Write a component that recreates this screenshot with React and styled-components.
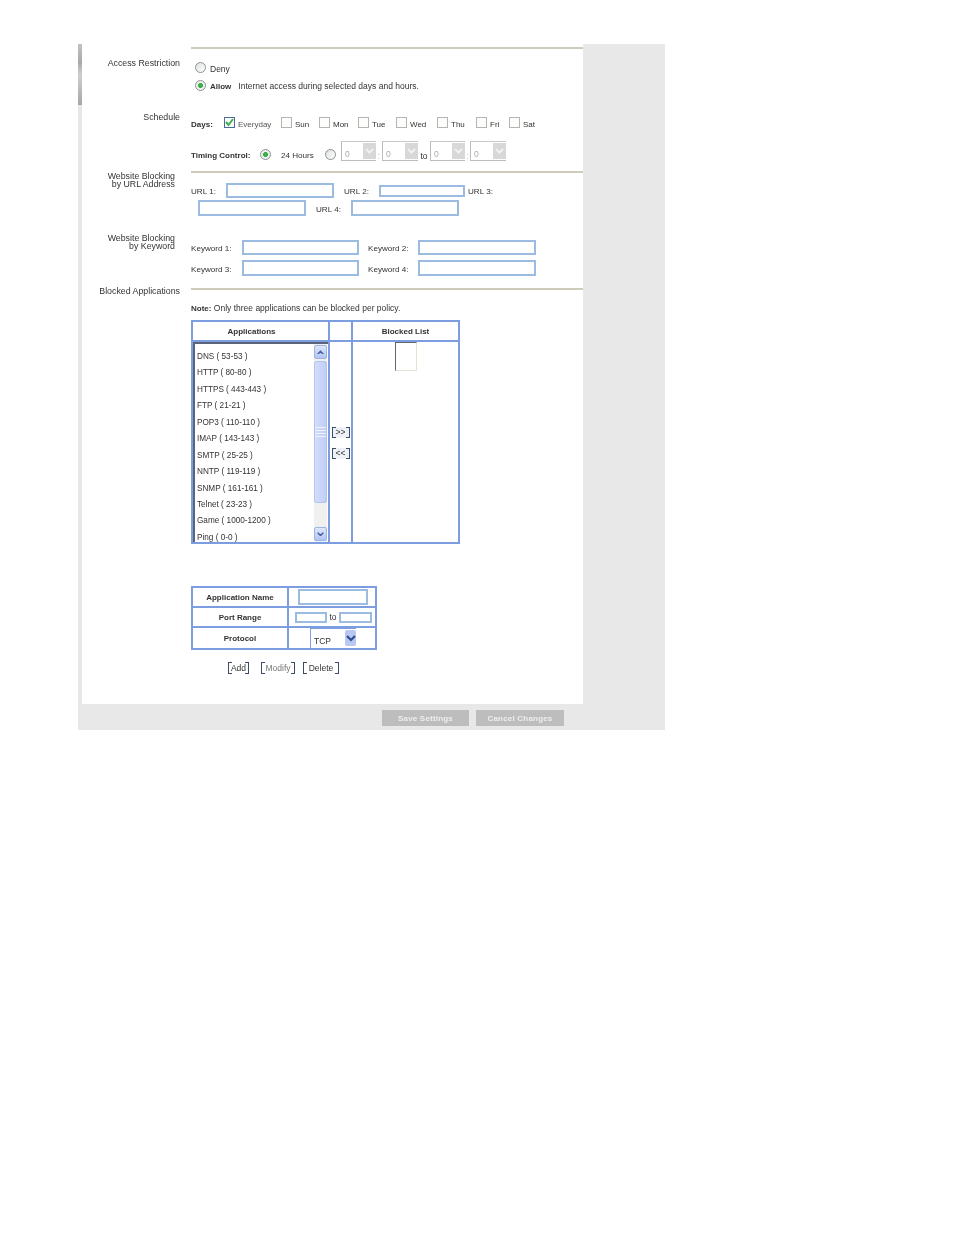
import React from 'react';
import styled, {createGlobalStyle} from 'styled-components';

const Global = createGlobalStyle`
    html, body {
        margin: 0;
        background: #fff;
    }
    body {
        font-family: "Liberation Sans", Arial, sans-serif;
        font-size: 8.5px;
        color: #333;
    }
`

const Page = styled.div`
    min-height: 1235px;
    padding: 44px 0 0 78px;
    box-sizing: border-box;
`

const Frame = styled.div`
    width: 587px;
    display: grid;
    grid-template-columns: 4px 501px 82px;
    grid-template-rows: 660px 26px;
    background: #e8e8e8;
    filter: blur(0.4px);
`

const Strip = styled.div`
    height: 61px;
    background: linear-gradient(#c4c4c4 0%, #a8a8a8 30%, #cfcfcf 50%, #a6a6a6 100%);
`

const Main = styled.div`
    background: #fff;
`

const Section = styled.section`
    height: ${p => p.$height}px;
    display: grid;
    grid-template-columns: 98px 392px;
    column-gap: 11px;
`

const Label = styled.div`
    padding: ${p => p.$top}px ${p => p.$right || 0}px 0 0;
    text-align: right;
    font-size: 8.8px;
    line-height: 8px;
    white-space: pre-line;
`

const Rule = styled.div`
    height: 2px;
    margin-top: ${p => p.$top}px;
    background: #cfcbbb;
`

const Row = styled.div`
    display: flex;
    align-items: center;
    height: ${p => p.$height}px;
    margin-top: ${p => p.$top || 0}px;
    padding-left: ${p => p.$left || 0}px;
    white-space: nowrap;
`

const Bold = styled.b`
    font-weight: bold;
    font-size: 8px;
    width: ${p => (p.$width ? p.$width + 'px' : 'auto')};
    padding-top: ${p => p.$top || 0}px;
    flex: none;
`

const Radio = styled.span`
    flex: none;
    width: 11px;
    height: 11px;
    box-sizing: border-box;
    margin-top: ${p => p.$top || 0}px;
    border: 1px solid #8a9298;
    border-radius: 50%;
    background: ${p => (p.$on
        ? 'radial-gradient(circle, #3fae4a 0 2.2px, #eef2ee 2.8px)'
        : 'linear-gradient(135deg, #e0e0dc, #fff)')};
`

const RadioText = styled.span`
    padding-top: ${p => p.$top || 0}px;
    margin-left: ${p => p.$left || 0}px;
    font-weight: ${p => (p.$bold ? 'bold' : 'normal')};
    font-size: ${p => (p.$bold ? '8px' : '8.5px')};
`

const DayItem = styled.div`
    flex: none;
    width: ${p => p.$width}px;
    display: flex;
    align-items: flex-start;
    gap: 3px;
`

const CheckBox = styled.span`
    flex: none;
    width: 11px;
    height: 11px;
    box-sizing: border-box;
    border: 1px solid ${p => (p.$on ? '#4a6a9c' : '#b4b4b0')};
    background: #fdfdfb;
    display: flex;
    align-items: center;
    justify-content: center;
    svg {
        display: block;
    }
`

const DayText = styled.span`
    padding-top: 4px;
    font-size: 8px;
    line-height: 8px;
    color: ${p => (p.$on ? '#555' : '#333')};
`

const TimeSelect = styled.div`
    flex: none;
    width: ${p => p.$width}px;
    height: 20px;
    box-sizing: border-box;
    display: flex;
    border-left: 1px solid #bdbdb8;
    border-top: 1px solid #c8c8c4;
    border-bottom: 1px solid #bdbdb8;
    padding-left: 3px;
    color: #aaa;
`

const TimeValue = styled.span`
    flex: 1;
    padding-top: 8px;
    line-height: 8px;
`

const TimeArrow = styled.span`
    flex: none;
    width: 13px;
    margin: 1px 0;
    background: #d8d8d8;
    display: flex;
    align-items: center;
    justify-content: center;
`

const Sep = styled.span`
    flex: none;
    width: ${p => p.$width}px;
    text-align: center;
    padding-top: ${p => p.$top || 0}px;
    color: ${p => p.$color || '#333'};
`

const Field = styled.input`
    flex: none;
    width: ${p => p.$width}px;
    height: ${p => p.$height}px;
    margin: 0;
    padding: 0;
    box-sizing: border-box;
    border: 2px solid #9bbbe0;
    background: #fff;
    outline: none;
`

const FieldLabel = styled.span`
    flex: none;
    width: ${p => p.$width}px;
    margin-left: ${p => p.$left || 0}px;
    padding-top: ${p => p.$top || 2}px;
    font-size: 8.1px;
`

const AppGrid = styled.div`
    width: 269px;
    height: 224px;
    margin-top: ${p => p.$top}px;
    box-sizing: border-box;
    display: grid;
    grid-template-columns: 137px 23px 1fr;
    grid-template-rows: 20px 1fr;
    border: 2px solid #7c9de0;
`

const Cell = styled.div`
    min-width: 0;
    min-height: 0;
    padding-right: ${p => p.$shift || 0}px;
    border-right: ${p => (p.$last ? 'none' : '2px solid #7c9de0')};
    border-bottom: ${p => (p.$head ? '2px solid #7c9de0' : 'none')};
    display: flex;
    justify-content: center;
    align-items: ${p => (p.$head ? 'center' : 'flex-start')};
    font-weight: ${p => (p.$head ? 'bold' : 'normal')};
    font-size: ${p => (p.$head ? '8px' : '8.5px')};
`

const ListBox = styled.div`
    flex: 1;
    height: 100%;
    display: flex;
    box-sizing: border-box;
    overflow: hidden;
    border-top: 2px solid #5b6478;
    border-left: 2px solid #5b6478;
`

const Options = styled.div`
    flex: 1;
    padding: 5px 0 0 2px;
    font-size: 8.2px;
`

const Option = styled.div`
    height: 16.45px;
    line-height: 16.45px;
    white-space: nowrap;
`

const Scrollbar = styled.div`
    flex: none;
    width: 13px;
    margin-right: 1px;
    padding-top: 1px;
    padding-bottom: 1px;
    box-sizing: border-box;
    display: flex;
    flex-direction: column;
    background: #f0f0ee;
`

const ScrollButton = styled.div`
    flex: none;
    height: 12px;
    border: 1px solid #9db4e4;
    border-radius: 2px;
    background: linear-gradient(#dde6fb, #b3c5f2);
    display: flex;
    align-items: center;
    justify-content: center;
`

const ScrollThumb = styled.div`
    flex: none;
    height: 142px;
    margin-top: 2px;
    box-sizing: border-box;
    border: 1px solid #b4c4ee;
    border-radius: 2px;
    background:
        repeating-linear-gradient(#eef2ff 0 1px, transparent 1px 3px) center / 100% 10px no-repeat,
        linear-gradient(90deg, #d4ddfb, #c0cdf8);
`

const ScrollTrack = styled.div`
    flex: 1;
`

const MoveButtons = styled.div`
    flex: 1;
    display: flex;
    flex-direction: column;
    align-items: center;
    padding-top: 85px;
    gap: 10px;
`

const Bracket = styled.button`
    width: ${p => p.$width}px;
    height: ${p => p.$height}px;
    margin-left: ${p => p.$left || 0}px;
    flex: none;
    padding: 0;
    font: inherit;
    line-height: 1;
    color: ${p => p.$color || '#333'};
    border: none;
    border-left: 1px solid #3d4c66;
    border-right: 1px solid #3d4c66;
    background:
        linear-gradient(#3d4c66, #3d4c66) left top / 3px 1px no-repeat,
        linear-gradient(#3d4c66, #3d4c66) right top / 3px 1px no-repeat,
        linear-gradient(#3d4c66, #3d4c66) left bottom / 3px 1px no-repeat,
        linear-gradient(#3d4c66, #3d4c66) right bottom / 3px 1px no-repeat,
        ${p => p.$fill || '#fff'};
`

const BlockedBox = styled.div`
    width: 22px;
    height: 29px;
    box-sizing: border-box;
    border-top: 1px solid #666;
    border-left: 1px solid #666;
    border-right: 1px solid #e4e2d4;
    border-bottom: 1px solid #e4e2d4;
`

const FormGrid = styled.div`
    width: 186px;
    margin-top: 42px;
    box-sizing: border-box;
    display: grid;
    grid-template-columns: 96px 1fr;
    grid-auto-rows: 20px;
    border: 2px solid #7c9de0;
`

const FormLabel = styled.div`
    display: flex;
    align-items: center;
    justify-content: center;
    font-weight: bold;
    font-size: 8px;
    border-right: 2px solid #7c9de0;
    border-bottom: ${p => (p.$last ? 'none' : '2px solid #7c9de0')};
`

const FormValue = styled.div`
    display: flex;
    align-items: center;
    padding-left: ${p => p.$left}px;
    border-bottom: ${p => (p.$last ? 'none' : '2px solid #7c9de0')};
`

const ProtocolSelect = styled.div`
    width: 46px;
    height: 100%;
    box-sizing: border-box;
    display: flex;
    padding-left: 3px;
    border-left: 1px solid #7c9de0;
    border-top: 1px solid #7c9de0;
`

const ProtocolText = styled.span`
    flex: 1;
    padding-top: 8px;
    line-height: 9px;
`

const ProtocolArrow = styled.span`
    flex: none;
    width: 11px;
    height: 16px;
    margin-top: 1px;
    background: #b9c8f2;
    border-radius: 2px;
    display: flex;
    align-items: center;
    justify-content: center;
`

const Footer = styled.div`
    grid-column: 1 / 4;
    display: flex;
    align-items: flex-start;
    gap: 7px;
    padding: 6px 0 0 304px;
`

const FooterButton = styled.button`
    width: ${p => p.$width}px;
    height: 16px;
    padding: 0;
    border: none;
    background: #bdbdbd;
    color: #eee;
    font: bold 8px "Liberation Sans", Arial, sans-serif;
    letter-spacing: 0.2px;
`

const Chevron = ({color, up, width = 9}) => (
    <svg width={width} height={width * 0.7} viewBox="0 0 10 7">
        <path d={up ? 'M1 6 L5 2 L9 6' : 'M1 1 L5 5 L9 1'} fill="none" stroke={color} strokeWidth="2.2"/>
    </svg>
)

const days = [
    {name: 'Sun', width: 38},
    {name: 'Mon', width: 39},
    {name: 'Tue', width: 38},
    {name: 'Wed', width: 41},
    {name: 'Thu', width: 39},
    {name: 'Fri', width: 33},
    {name: 'Sat', width: 30},
]

const apps = [
    'DNS ( 53-53 )',
    'HTTP ( 80-80 )',
    'HTTPS ( 443-443 )',
    'FTP ( 21-21 )',
    'POP3 ( 110-110 )',
    'IMAP ( 143-143 )',
    'SMTP ( 25-25 )',
    'NNTP ( 119-119 )',
    'SNMP ( 161-161 )',
    'Telnet ( 23-23 )',
    'Game ( 1000-1200 )',
    'Ping ( 0-0 )',
]

const TimeBox = ({width}) => (
    <TimeSelect $width={width}>
        <TimeValue>0</TimeValue>
        <TimeArrow><Chevron color="#f2f2f2"/></TimeArrow>
    </TimeSelect>
)

export default function App() {
    return (
        <Page>
            <Global/>
            <Frame>
                <div><Strip/></div>
                <Main>
                    <Section $height={64}>
                        <Label $top={15}>Access Restriction</Label>
                        <div>
                            <Rule $top={3}/>
                            <Row $height={18} $top={9} $left={4}>
                                <Radio/>
                                <RadioText $left={4} $top={3}>Deny</RadioText>
                            </Row>
                            <Row $height={18} $left={4}>
                                <Radio $on/>
                                <RadioText $left={4} $top={2} $bold>Allow</RadioText>
                                <RadioText $left={7} $top={2}>Internet access during selected days and hours.</RadioText>
                            </Row>
                        </div>
                    </Section>
                    <Section $height={63}>
                        <Label $top={5}>Schedule</Label>
                        <div>
                            <Row $height={20} $top={5}>
                                <Bold $width={33} $top={2}>Days:</Bold>
                                <DayItem $width={57}>
                                    <CheckBox $on>
                                        <svg width="9" height="9" viewBox="0 0 9 9">
                                            <path d="M1 4 L3.5 7 L8 1" fill="none" stroke="#3fae4a" strokeWidth="2"/>
                                        </svg>
                                    </CheckBox>
                                    <DayText $on>Everyday</DayText>
                                </DayItem>
                                {days.map(d => (
                                    <DayItem key={d.name} $width={d.width}>
                                        <CheckBox/>
                                        <DayText>{d.name}</DayText>
                                    </DayItem>
                                ))}
                            </Row>
                            <Row $height={20} $top={8}>
                                <Bold $width={69} $top={9}>Timing Control:</Bold>
                                <Radio $on $top={6}/>
                                <FieldLabel $width={44} $left={10} $top={9}>24 Hours</FieldLabel>
                                <Radio $top={6}/>
                                <Sep $width={5}/>
                                <TimeBox width={35}/>
                                <Sep $width={6} $top={9} $color="#bbb">:</Sep>
                                <TimeBox width={36}/>
                                <Sep $width={12} $top={9}>to</Sep>
                                <TimeBox width={35}/>
                                <Sep $width={5} $top={9} $color="#bbb">:</Sep>
                                <TimeBox width={36}/>
                            </Row>
                        </div>
                    </Section>
                    <Section $height={61}>
                        <Label $top={1} $right={5}>{'Website Blocking\nby URL Address'}</Label>
                        <div>
                            <Rule $top={0}/>
                            <Row $height={15} $top={10}>
                                <FieldLabel $width={35}>URL 1:</FieldLabel>
                                <Field $width={108} $height={15}/>
                                <FieldLabel $width={35} $left={10}>URL 2:</FieldLabel>
                                <Field $width={86} $height={12}/>
                                <FieldLabel $width={30} $left={3}>URL 3:</FieldLabel>
                            </Row>
                            <Row $height={16} $top={2} $left={7}>
                                <Field $width={108} $height={16}/>
                                <FieldLabel $width={35} $left={10}>URL 4:</FieldLabel>
                                <Field $width={108} $height={16}/>
                            </Row>
                        </div>
                    </Section>
                    <Section $height={55}>
                        <Label $top={2} $right={5}>{'Website Blocking\nby Keyword'}</Label>
                        <div>
                            <Row $height={15} $top={8}>
                                <FieldLabel $width={51}>Keyword 1:</FieldLabel>
                                <Field $width={117} $height={15}/>
                                <FieldLabel $width={50} $left={9}>Keyword 2:</FieldLabel>
                                <Field $width={118} $height={15}/>
                            </Row>
                            <Row $height={16} $top={5}>
                                <FieldLabel $width={51}>Keyword 3:</FieldLabel>
                                <Field $width={117} $height={16}/>
                                <FieldLabel $width={50} $left={9}>Keyword 4:</FieldLabel>
                                <Field $width={118} $height={16}/>
                            </Row>
                        </div>
                    </Section>
                    <Section $height={417}>
                        <Label $top={0}>Blocked Applications</Label>
                        <div>
                            <Rule $top={1}/>
                            <Row $height={10} $top={13}>
                                <Bold>Note:</Bold>&nbsp;Only three applications can be blocked per policy.
                            </Row>
                            <AppGrid $top={7}>
                                <Cell $head $shift={18}>Applications</Cell>
                                <Cell $head/>
                                <Cell $head $last>Blocked List</Cell>
                                <Cell>
                                    <ListBox>
                                        <Options>
                                            {apps.map(a => <Option key={a}>{a}</Option>)}
                                        </Options>
                                        <Scrollbar>
                                            <ScrollButton><Chevron color="#4a5f9a" up width={7}/></ScrollButton>
                                            <ScrollThumb/>
                                            <ScrollTrack/>
                                            <ScrollButton><Chevron color="#4a5f9a" width={7}/></ScrollButton>
                                        </Scrollbar>
                                    </ListBox>
                                </Cell>
                                <Cell>
                                    <MoveButtons>
                                        <Bracket $width={18} $height={11} $fill="#eef2f6">&gt;&gt;</Bracket>
                                        <Bracket $width={18} $height={11} $fill="#eef2f6">&lt;&lt;</Bracket>
                                    </MoveButtons>
                                </Cell>
                                <Cell $last><BlockedBox/></Cell>
                            </AppGrid>
                            <FormGrid>
                                <FormLabel>Application Name</FormLabel>
                                <FormValue $left={9}><Field $width={70} $height={16}/></FormValue>
                                <FormLabel>Port Range</FormLabel>
                                <FormValue $left={6}>
                                    <Field $width={32} $height={11}/>
                                    <Sep $width={12}>to</Sep>
                                    <Field $width={33} $height={11}/>
                                </FormValue>
                                <FormLabel $last>Protocol</FormLabel>
                                <FormValue $left={21} $last>
                                    <ProtocolSelect>
                                        <ProtocolText>TCP</ProtocolText>
                                        <ProtocolArrow><Chevron color="#2f4f8f" width={10}/></ProtocolArrow>
                                    </ProtocolSelect>
                                </FormValue>
                            </FormGrid>
                            <Row $height={12} $top={12} $left={37}>
                                <Bracket $width={21} $height={12}>Add</Bracket>
                                <Bracket $width={34} $height={12} $left={12} $color="#777">Modify</Bracket>
                                <Bracket $width={36} $height={12} $left={8}>Delete</Bracket>
                            </Row>
                        </div>
                    </Section>
                </Main>
                <div/>
                <Footer>
                    <FooterButton $width={87}>Save Settings</FooterButton>
                    <FooterButton $width={88}>Cancel Changes</FooterButton>
                </Footer>
            </Frame>
        </Page>
    );
}
